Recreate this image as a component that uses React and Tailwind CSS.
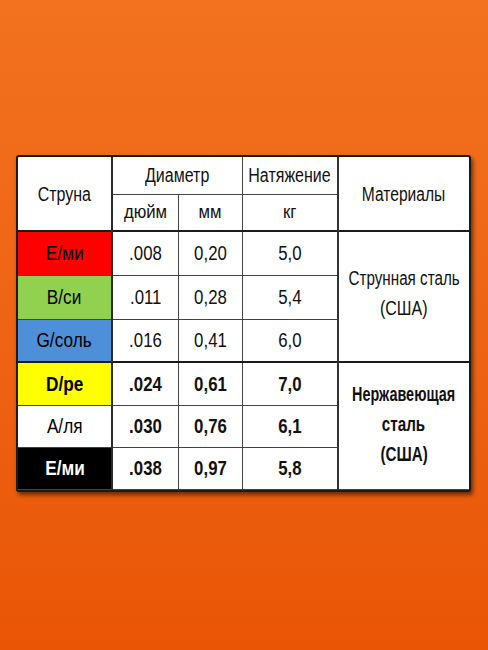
const rows = [
  { name: 'E/ми', inch: '.008', mm: '0,20', kg: '5,0', cell: 'bg-[#ff0000] text-black' },
  { name: 'B/си', inch: '.011', mm: '0,28', kg: '5,4', cell: 'bg-[#92d050] text-black' },
  { name: 'G/соль', inch: '.016', mm: '0,41', kg: '6,0', cell: 'bg-[#4f8fd8] text-black', groupEnd: true },
  { name: 'D/ре', inch: '.024', mm: '0,61', kg: '7,0', cell: 'bg-[#ffff00] text-black font-bold', bold: true },
  { name: 'A/ля', inch: '.030', mm: '0,76', kg: '6,1', cell: 'bg-white text-black font-normal', bold: true },
  { name: 'E/ми', inch: '.038', mm: '0,97', kg: '5,8', cell: 'bg-black text-white font-semibold', bold: true },
];

const heights = ['h-[44px]', 'h-[44px]', 'h-[43px]', 'h-[43px]', 'h-[42px]', 'h-[42px]'];

// narrow text: the reference uses a condensed face, so squeeze the installed one
// (flex wrapper keeps it centred even when the unscaled width overflows the cell)
function N({ children, s = 'scale-x-[0.8]' }) {
  return (
    <span className="flex justify-center">
      <span className={`inline-block whitespace-nowrap ${s}`}>{children}</span>
    </span>
  );
}

export default function App() {
  return (
    <div className="min-h-[650px] w-full bg-gradient-to-b from-[#f2721f] to-[#e95505] pt-[155px] px-[16px] font-['Liberation_Sans',Arial,sans-serif] text-[20px] text-[#111]">
      <div className="w-[455px] rounded-[3px] border-2 border-[#1a1a1a] bg-white overflow-hidden shadow-[2px_3px_4px_rgba(0,0,0,0.55)]">
        <table className="w-full border-collapse table-fixed text-center">
          <colgroup>
            <col className="w-[94px]" />
            <col className="w-[66px]" />
            <col className="w-[64px]" />
            <col className="w-[96px]" />
            <col />
          </colgroup>
          <thead>
            <tr className="h-[37px]">
              <th rowSpan={2} className="font-normal border-r-2 border-[#2a2a2a]"><N>Струна</N></th>
              <th colSpan={2} className="font-normal border-r border-b border-[#444]"><N>Диаметр</N></th>
              <th className="font-normal border-r border-b border-[#444]"><N>Натяжение</N></th>
              <th rowSpan={2} className="font-normal border-l-2 border-[#333]"><N s="scale-x-[0.78]">Материалы</N></th>
            </tr>
            <tr className="h-[37px] border-b-2 border-[#1a1a1a]">
              <th className="font-normal text-[19px] border-r border-[#444]"><N s="scale-x-[0.88]">дюйм</N></th>
              <th className="font-normal text-[19px] border-r border-[#444]"><N s="scale-x-[0.88]">мм</N></th>
              <th className="font-normal text-[19px] border-r border-[#444]"><N s="scale-x-[0.88]">кг</N></th>
            </tr>
          </thead>
          <tbody>
            {rows.map((r, i) => (
              <tr
                key={i}
                className={`${heights[i]} ${r.groupEnd ? 'border-b-2 border-[#1a1a1a]' : 'border-b border-[#444]'} ${r.bold ? 'font-bold' : ''}`}
              >
                <td className={`${r.cell} border-r-2 border-[#2a2a2a]`}><N s="scale-x-[0.86]">{r.name}</N></td>
                <td className="border-r border-[#444]"><N s="scale-x-[0.84]">{r.inch}</N></td>
                <td className="border-r border-[#444]"><N s="scale-x-[0.84]">{r.mm}</N></td>
                <td className="border-r border-[#444]"><N s="scale-x-[0.84]">{r.kg}</N></td>
                {i === 0 && (
                  <td rowSpan={3} className="font-normal leading-[30px] pb-[8px] border-l-2 border-[#333]">
                    <N s="scale-x-[0.76]">Струнная сталь</N>
                    <N>(США)</N>
                  </td>
                )}
                {i === 3 && (
                  <td rowSpan={3} className="font-bold leading-[30px] pb-[4px] border-l-2 border-[#333]">
                    <N s="scale-x-[0.72]">Нержавеющая</N>
                    <N s="scale-x-[0.76]">сталь</N>
                    <N s="scale-x-[0.76]">(США)</N>
                  </td>
                )}
              </tr>
            ))}
          </tbody>
        </table>
      </div>
    </div>
  );
}
